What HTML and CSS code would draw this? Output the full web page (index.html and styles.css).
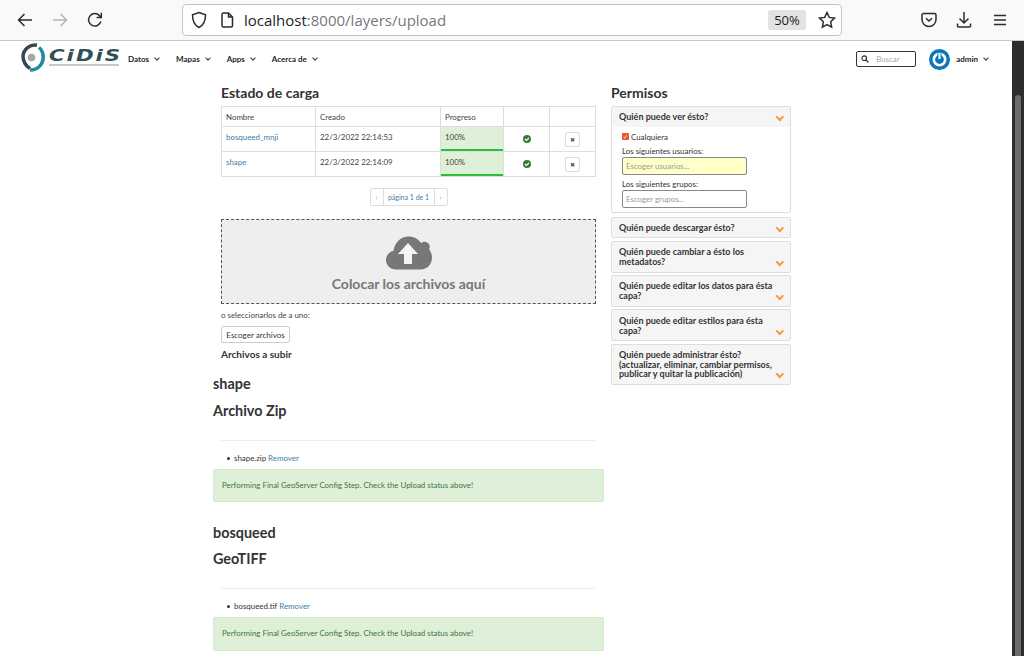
FILE: index.html
```html
<!DOCTYPE html>
<html lang="es">
<head>
  <meta charset="UTF-8" />
  <title>Cargar capas</title>
  <link rel="stylesheet" href="styles.css">
</head>
<body>

  <header class="browser">
    <svg class="tool" width="18" height="18" viewBox="0 0 18 18"><path d="M16 9H2.500M8.500 3L2.500 9l6 6" /></svg>
    <svg class="tool tool-off" width="18" height="18" viewBox="0 0 18 18"><path d="M2 9h13.500M9.500 3l6 6-6 6" /></svg>
    <svg class="tool" width="18" height="18" viewBox="0 0 18 18"><path d="M14.800 10.500A6.200 6.200 0 1 1 13.300 4.500L15 6.300M15.300 1.800v4.700h-4.700" /></svg>
    <div class="urlbar">
      <svg class="tool" width="16" height="18" viewBox="0 0 16 18"><path d="M8 1.500l6.500 2.200c0 6-1.500 10.500-6.500 12.800C3 14.200 1.500 9.700 1.500 3.700z" /></svg>
      <svg class="tool page-icon" width="13" height="16" viewBox="0 0 13 16"><path d="M2.500 1h5l4 4v8.500a1.500 1.500 0 0 1-1.500 1.500H2.500A1.500 1.500 0 0 1 1 13.500v-11A1.500 1.500 0 0 1 2.500 1zM7.500 1v4h4" /></svg>
      <span class="url"><b>localhost</b>:8000/layers/upload</span>
      <span class="zoom-level">50%</span>
      <svg class="tool" width="18" height="18" viewBox="0 0 18 18"><path d="M9 1.500l2.300 4.900 5.200.7-3.800 3.700.9 5.300L9 13.500l-4.600 2.600.9-5.300L1.500 7.100l5.200-.7z" /></svg>
    </div>
    <svg class="tool pocket" width="16" height="16" viewBox="0 0 16 16"><path d="M2.500 1.500h11A1.500 1.500 0 0 1 15 3v4.500a7 7 0 0 1-14 0V3a1.500 1.500 0 0 1 1.500-1.500zM5 6.200l3 2.800 3-2.800" /></svg>
    <svg class="tool download" width="16" height="18" viewBox="0 0 16 18"><path d="M8 1v10.500M3.500 7.500L8 12l4.500-4.500M1.500 12.500v2.500a1 1 0 0 0 1 1h11a1 1 0 0 0 1-1v-2.500" /></svg>
    <svg class="tool menu" width="14" height="12" viewBox="0 0 14 12"><path d="M1 1.500h12M1 6h12M1 10.500h12" /></svg>
  </header>

  <div class="viewport">
    <div class="page">
      <nav class="navbar">
        <a class="logo" href="#">
          <svg width="25" height="29" viewBox="0 0 25 29">
            <path d="M17 2.200A12 12 0 0 0 3 13c0 5.500 3 10 7 12.500" class="logo-dark" />
            <path d="M19 4.500c3 2.500 4.200 6 4.200 9.500 0 7-5 13-13.200 13" class="logo-teal" />
            <circle cx="11.500" cy="14.500" r="3.800" fill="#a5a9aa" />
          </svg>
          <span class="logo-text">
            <span class="logo-name">CiDiS</span>
            <span class="logo-rule"></span>
          </span>
        </a>
        <a class="nav-item" href="#">Datos <span class="caret"></span></a>
        <a class="nav-item" href="#">Mapas <span class="caret"></span></a>
        <a class="nav-item" href="#">Apps <span class="caret"></span></a>
        <a class="nav-item" href="#">Acerca de <span class="caret"></span></a>
        <div class="search">
          <svg width="8" height="8" viewBox="0 0 8 8"><circle cx="3.200" cy="3.200" r="2.300" /><path d="M5 5l2.500 2.500" /></svg>
          <span>Buscar</span>
        </div>
        <svg class="avatar" width="21" height="21" viewBox="0 0 21 21">
          <circle cx="10.500" cy="10.500" r="10.500" fill="#0a77b8" />
          <circle cx="10.500" cy="10.500" r="5.700" fill="none" stroke="#fff" stroke-width="2.600" />
          <path d="M10.500 3.500v6" stroke="#0a77b8" stroke-width="4" />
          <path d="M10.500 4v6" stroke="#fff" stroke-width="2.200" />
        </svg>
        <a class="nav-item user" href="#">admin <span class="caret"></span></a>
      </nav>

      <main class="content">
        <section class="uploads">
          <h3 class="title">Estado de carga</h3>
          <table class="status">
            <thead>
              <tr>
                <th class="col-name">Nombre</th>
                <th class="col-date">Creado</th>
                <th class="col-progress">Progreso</th>
                <th class="col-ok"></th>
                <th></th>
              </tr>
            </thead>
            <tbody>
              <tr>
                <td><a href="#">bosqueed_mnji</a></td>
                <td>22/3/2022 22:14:53</td>
                <td class="progress">100%</td>
                <td class="center"><svg class="ok" width="8" height="8" viewBox="0 0 8 8"><circle cx="4" cy="4" r="4" /><path d="M2 4l1.500 1.500L6 2.800" /></svg></td>
                <td class="center"><span class="remove">✖</span></td>
              </tr>
              <tr>
                <td><a href="#">shape</a></td>
                <td>22/3/2022 22:14:09</td>
                <td class="progress">100%</td>
                <td class="center"><svg class="ok" width="8" height="8" viewBox="0 0 8 8"><circle cx="4" cy="4" r="4" /><path d="M2 4l1.500 1.500L6 2.800" /></svg></td>
                <td class="center"><span class="remove">✖</span></td>
              </tr>
            </tbody>
          </table>

          <div class="pager">
            <span class="pager-btn">‹</span>
            <span class="pager-label">página 1 de 1</span>
            <span class="pager-btn">›</span>
          </div>

          <div class="dropzone">
            <svg width="46" height="34" viewBox="0 0 46 34">
              <path fill="#777" d="M10 33.500C4.500 33.500 0 29.500 0 24c0-4.500 3-8 7.500-9.200C8.500 6.500 15 .5 22.500.5c5.500 0 10 2.700 12.700 6.500 1-.8 2.300-1.300 3.300-1.300 3 0 5.300 2.300 5.300 5.300 0 1-.2 1.800-.7 2.600 1.800 2 2.900 5 2.900 7.900 0 7-5 12-11 12z" />
              <path fill="#f4f4f4" d="M22 7l10 11h-6v10h-8V18h-6z" />
            </svg>
            <p>Colocar los archivos aquí</p>
          </div>

          <p class="pick-text">o seleccionarlos de a uno:</p>
          <button class="pick-btn" type="button">Escoger archivos</button>
          <h5 class="to-upload">Archivos a subir</h5>
        </section>

        <aside class="perms">
          <h3 class="title">Permisos</h3>

          <div class="perm perm-open">
            <div class="perm-head"><span>Quién puede ver ésto?</span><span class="chev"></span></div>
            <div class="perm-body">
              <label class="check"><span class="box">✓</span>Cualquiera</label>
              <label class="field-label">Los siguientes usuarios:</label>
              <div class="field field-on">Escoger usuarios...</div>
              <label class="field-label">Los siguientes grupos:</label>
              <div class="field">Escoger grupos...</div>
            </div>
          </div>

          <div class="perm"><div class="perm-head"><span>Quién puede descargar ésto?</span><span class="chev"></span></div></div>
          <div class="perm"><div class="perm-head"><span>Quién puede cambiar a ésto los metadatos?</span><span class="chev"></span></div></div>
          <div class="perm"><div class="perm-head"><span>Quién puede editar los datos para ésta capa?</span><span class="chev"></span></div></div>
          <div class="perm"><div class="perm-head"><span>Quién puede editar estilos para ésta capa?</span><span class="chev"></span></div></div>
          <div class="perm"><div class="perm-head tight"><span>Quién puede administrar ésto? (actualizar, eliminar, cambiar permisos, publicar y quitar la publicación)</span><span class="chev"></span></div></div>
        </aside>

        <section class="files">
          <h3 class="file-title">shape</h3>
          <h3 class="file-type">Archivo Zip</h3>
          <hr>
          <ul>
            <li>shape.zip <a href="#">Remover</a></li>
          </ul>
          <div class="alert">Performing Final GeoServer Config Step. Check the Upload status above!</div>

          <h3 class="file-title second">bosqueed</h3>
          <h3 class="file-type">GeoTIFF</h3>
          <hr>
          <ul>
            <li>bosqueed.tif <a href="#">Remover</a></li>
          </ul>
          <div class="alert">Performing Final GeoServer Config Step. Check the Upload status above!</div>
        </section>
      </main>
    </div>

    <div class="scrollbar"><div class="thumb"></div></div>
  </div>

</body>
</html>
```

FILE: styles.css
```css
* {
  box-sizing: border-box;
}

html, body {
  height: 100%;
}

body {
  margin: 0;
  height: 656px;
  overflow: hidden;
  display: flex;
  flex-direction: column;
  font-family: Lato, "Open Sans", sans-serif;
  font-size: 7.900px;
  color: #333;
  background-color: white;
}

a {
  color: #3f7da8;
  text-decoration: none;
}

/* browser toolbar */
.browser {
  height: 41px;
  flex: none;
  display: flex;
  align-items: center;
  padding: 0 0 0 16px;
  background-color: #f9f9fa;
  border-bottom: 1px solid #c8c8ca;
}

.tool {
  flex: none;
  fill: none;
  stroke: #2b2b30;
  stroke-width: 1.500;
  margin-right: 17px;
}

.tool-off {
  stroke: #b4b4b6;
}

.urlbar {
  width: 660px;
  height: 32px;
  margin-left: 61px;
  margin-right: 79px;
  padding-left: 8px;
  display: flex;
  align-items: center;
  background-color: white;
  border: 1px solid #c4c4c6;
  border-radius: 4px;
}

.urlbar .tool {
  margin-right: 0;
}

.page-icon {
  margin-left: 14px;
}

.url {
  margin-left: 10px;
  flex: 1;
  font-family: "Open Sans", sans-serif;
  font-size: 15px;
  color: #77777b;
}

.url b {
  font-weight: normal;
  color: #1d1d20;
}

.zoom-level {
  width: 38px;
  height: 20px;
  margin-right: 12px;
  background-color: #e2e2e3;
  border-radius: 3px;
  font-family: "Open Sans", sans-serif;
  font-size: 13px;
  line-height: 20px;
  text-align: center;
  color: #1d1d20;
}

.urlbar > .tool:last-child {
  margin-right: 5px;
}

.pocket {
  margin-right: 19px;
}

.download {
  margin-right: 21px;
}

.menu {
  margin-right: 0;
}

/* page */
.viewport {
  flex: 1;
  display: flex;
  min-height: 0;
}

.page {
  flex: 1;
  min-width: 0;
}

.scrollbar {
  width: 12px;
  flex: none;
  padding: 54px 3px 0;
  background-color: #2d2d2d;
}

.thumb {
  height: 561px;
  background-color: #6b6b6b;
  border-radius: 3px 3px 0 0;
}

.navbar {
  height: 36px;
  padding: 0 23px 0 20px;
  display: flex;
  align-items: center;
  font-weight: bold;
}

.logo {
  display: flex;
  align-items: center;
  margin-right: 9px;
  margin-top: -4px;
}

.logo svg path {
  fill: none;
  stroke-width: 3.500;
}

.logo-dark {
  stroke: #33484f;
}

.logo-teal {
  stroke: #1d8c9c;
}

.logo-text {
  margin-left: 4px;
  display: flex;
  flex-direction: column;
  width: 70px;
}

.logo-name {
  font-family: "DejaVu Sans", sans-serif;
  font-size: 16px;
  line-height: 15px;
  font-weight: bold;
  font-style: italic;
  letter-spacing: 1.500px;
  color: #2f5058;
  transform: scaleX(1.330);
  transform-origin: left;
}

.logo-rule {
  height: 2px;
  margin-top: 1px;
  background-color: #c5c9ca;
}

.nav-item {
  display: flex;
  align-items: center;
  gap: 5px;
  margin-right: 16px;
  font-size: 8px;
  color: #26262a;
}

.caret {
  width: 4px;
  height: 4px;
  margin: -3px 1px 0;
  border-right: 1px solid #333;
  border-bottom: 1px solid #333;
  transform: rotate(45deg);
}

.search {
  width: 60px;
  height: 16px;
  margin-left: auto;
  margin-right: 13px;
  padding-left: 4px;
  display: flex;
  align-items: center;
  gap: 7px;
  border: 1px solid #333;
  border-radius: 2px;
  font-weight: normal;
  color: #aaa;
}

.search svg {
  fill: none;
  stroke: #333;
  stroke-width: 1.200;
}

.avatar {
  margin-right: 6px;
}

.user {
  margin-right: 0;
}

.content {
  width: 1012px;
  display: grid;
  grid-template-columns: 391px 180px;
  column-gap: 7px;
  grid-template-rows: auto auto;
  padding-left: 213px;
  padding-top: 7px;
}

/* left column */
.uploads {
  padding-left: 8px;
}

.title {
  margin: 0 0 5px;
  font-size: 14px;
  line-height: 17px;
  font-weight: bold;
  color: #333;
}

.status {
  width: 375px;
  table-layout: fixed;
  border-collapse: collapse;
}

.status th, .status td {
  border: 1px solid #ddd;
  padding: 0 4px;
  text-align: left;
  font-weight: normal;
  color: #444;
}

.status th {
  height: 20px;
}

.status td {
  height: 25px;
  vertical-align: top;
  padding-top: 5px;
}

.col-name {
  width: 94px;
}

.col-date {
  width: 125px;
}

.col-progress {
  width: 63px;
}

.col-ok {
  width: 46px;
}

.status .progress {
  background-color: #dff0d8;
  box-shadow: inset 0 -2px 0 #2dbe3c;
}

.status .center {
  text-align: center;
  padding: 5px 0 0;
}

.status a {
  color: #3f7da8;
}

.ok {
  margin-top: 3px;
  fill: #3a7a38;
  stroke: none;
}

.ok path {
  fill: none;
  stroke: white;
  stroke-width: 1.200;
}

.remove {
  width: 15px;
  height: 15px;
  display: inline-block;
  border: 1px solid #ddd;
  border-radius: 2px;
  font-size: 6px;
  line-height: 13px;
  color: #555;
  font-family: "DejaVu Sans", sans-serif;
}

.pager {
  width: 375px;
  margin-top: 11px;
  display: flex;
  justify-content: center;
  font-size: 7px;
}

.pager span {
  height: 18px;
  display: block;
  border: 1px solid #ddd;
  line-height: 16px;
  text-align: center;
  color: #999;
}

.pager-btn {
  width: 14px;
}

.pager-btn:first-child {
  border-radius: 2px 0 0 2px;
}

.pager-btn:last-child {
  border-radius: 0 2px 2px 0;
}

.pager .pager-label {
  width: 52px;
  margin: 0 -1px;
  color: #3f7da8;
}

.dropzone {
  width: 375px;
  height: 85px;
  margin-top: 13px;
  padding-top: 16px;
  display: flex;
  flex-direction: column;
  align-items: center;
  background-color: #eee;
  border: 1px dashed #555;
}

.dropzone p {
  margin: 5px 0 0;
  font-size: 14px;
  line-height: 17px;
  font-weight: bold;
  color: #777;
}

.pick-text {
  margin: 6px 0 0;
  line-height: 10px;
  color: #444;
}

.pick-btn {
  width: 69px;
  height: 17px;
  margin-top: 6px;
  padding: 0;
  display: block;
  background: white;
  border: 1px solid #ccc;
  border-radius: 2px;
  font-family: inherit;
  font-size: 8px;
  color: #333;
}

.to-upload {
  margin: 5px 0 0;
  font-size: 10px;
  line-height: 12px;
  font-weight: bold;
  color: #333;
}

/* right column */
.perms {
  grid-row: span 2;
}

.perm {
  margin-bottom: 2.600px;
  background-color: white;
  border: 1px solid #ddd;
  border-radius: 2px;
}

.perm-open {
  margin-bottom: 3.300px;
}

.perm-head {
  position: relative;
  padding: 5.350px 10px 4.350px 7px;
  background-color: #f5f5f5;
  font-size: 9px;
  line-height: 10px;
  font-weight: bold;
  color: #333;
}

.perm-head.tight {
  padding-bottom: 5.350px;
  line-height: 9.500px;
}

.chev {
  position: absolute;
  right: 8px;
  bottom: 7px;
  width: 5.500px;
  height: 5.500px;
  border-right: 2px solid #f7953b;
  border-bottom: 2px solid #f7953b;
  transform: rotate(45deg);
}

.perm-body {
  height: 85.600px;
  padding: 5px 10px;
}

.check {
  display: flex;
  align-items: center;
  gap: 2px;
  line-height: 10px;
}

.box {
  width: 7px;
  height: 7px;
  background-color: #e8562a;
  border-radius: 1px;
  color: white;
  font-size: 6px;
  line-height: 7px;
  text-align: center;
}

.field-label {
  display: block;
  margin-top: 4px;
  line-height: 10px;
}

.field {
  width: 125px;
  height: 18px;
  margin-top: 1px;
  padding-left: 3px;
  border: 1px solid #888;
  border-radius: 2px;
  line-height: 16px;
  color: #999;
}

.field-on {
  background-color: #ffffc8;
}

/* uploaded files */
.files {
  width: 391px;
}

.file-title, .file-type {
  margin: 0;
  font-size: 14.400px;
  line-height: 16px;
  font-weight: bold;
  color: #333;
}

.file-title {
  margin-top: 16px;
}

.file-title.second {
  margin-top: 23px;
}

.file-type {
  margin-top: 11px;
}

.second + .file-type {
  margin-top: 10px;
}

.files hr {
  width: 375px;
  margin: 21px 0 0 8px;
  border: 0;
  border-top: 1px solid #eee;
}

.files ul {
  margin: 12px 0 0;
  padding: 0 0 0 14px;
  list-style: none;
  line-height: 11px;
}

.files li::before {
  content: "";
  display: inline-block;
  width: 3px;
  height: 3px;
  margin: 0 4px 1px 0;
  background-color: #333;
  border-radius: 50%;
}

.alert {
  height: 33px;
  margin-top: 5px;
  padding-left: 8px;
  background-color: #dff0d8;
  border: 1px solid #d6e9c6;
  border-radius: 2px;
  line-height: 31px;
  color: #3c763d;
}

.second ~ .alert {
  height: 34px;
}
```
